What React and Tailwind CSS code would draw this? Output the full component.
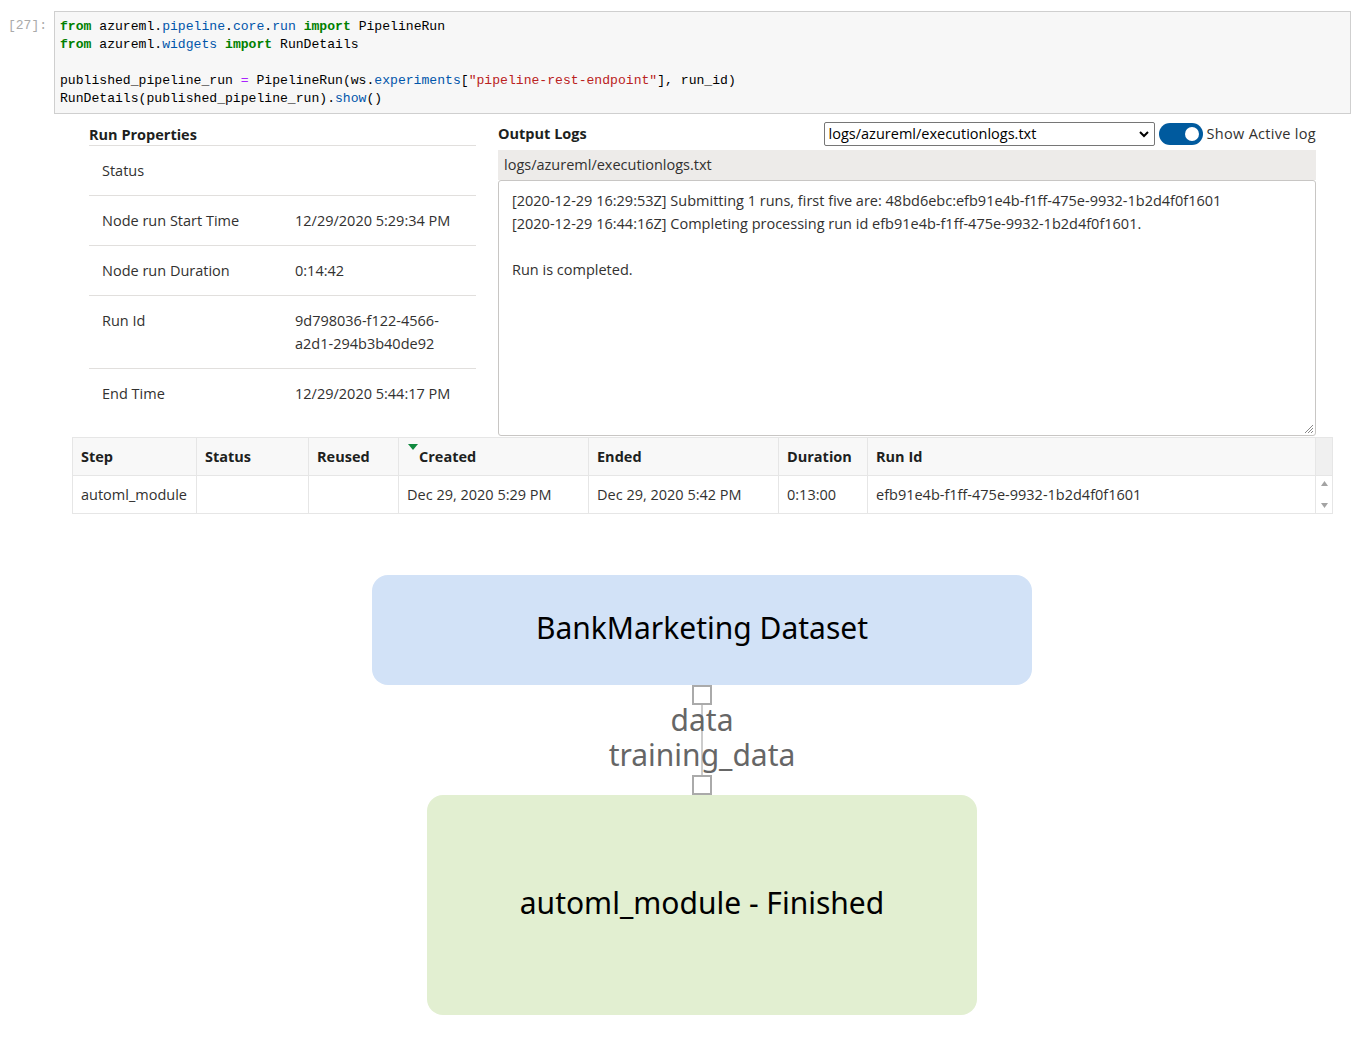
import React from "react";

const sans = "font-['Open_Sans',sans-serif]";

const props = [
  { label: "Status", value: "" },
  { label: "Node run Start Time", value: "12/29/2020 5:29:34 PM" },
  { label: "Node run Duration", value: "0:14:42" },
  { label: "Run Id", value: "9d798036-f122-4566-a2d1-294b3b40de92" },
  { label: "End Time", value: "12/29/2020 5:44:17 PM" },
];

const cols = [
  { name: "Step", w: "w-[124px]", v: "automl_module" },
  { name: "Status", w: "w-[112px]", v: "" },
  { name: "Reused", w: "w-[90px]", v: "" },
  { name: "Created", w: "w-[190px]", v: "Dec 29, 2020 5:29 PM", sorted: true },
  { name: "Ended", w: "w-[190px]", v: "Dec 29, 2020 5:42 PM" },
  { name: "Duration", w: "w-[89px]", v: "0:13:00" },
  { name: "Run Id", w: "flex-1", v: "efb91e4b-f1ff-475e-9932-1b2d4f0f1601" },
];

function CodeCell() {
  return (
    <div className="flex pt-[11px] pr-[9px]">
      <div className="w-[54px] shrink-0 pl-[8px] pt-[6px] font-['Liberation_Mono',monospace] text-[13px] leading-[18px] text-[#aaaaaa]">
        [27]:
      </div>
      <pre className="flex-1 h-[103px] bg-[#f7f7f7] border border-[#cfcfcf] pl-[5px] pt-[6px] font-['Liberation_Mono',monospace] text-[13.1px] leading-[18px] text-black">
        <span className="text-[#008000] font-bold">from</span> azureml.<span className="text-[#0055aa]">pipeline</span>.<span className="text-[#0055aa]">core</span>.<span className="text-[#0055aa]">run</span> <span className="text-[#008000] font-bold">import</span> PipelineRun{"\n"}
        <span className="text-[#008000] font-bold">from</span> azureml.<span className="text-[#0055aa]">widgets</span> <span className="text-[#008000] font-bold">import</span> RunDetails{"\n"}
        {"\n"}
        published_pipeline_run <span className="text-[#aa22ff]">=</span> PipelineRun(ws.<span className="text-[#0055aa]">experiments</span>[<span className="text-[#ba2121]">"pipeline-rest-endpoint"</span>], run_id){"\n"}
        RunDetails(published_pipeline_run).<span className="text-[#0055aa]">show</span>()
      </pre>
    </div>
  );
}

function RunProperties() {
  return (
    <div className="w-[387px] shrink-0">
      <div className="h-[32px] pt-[11px] border-b border-[#e1dfdd] text-[14.5px] leading-[20px] font-bold text-[#201f1e]">
        Run Properties
      </div>
      {props.map((p, i) => (
        <div
          key={p.label}
          className={`flex pl-[13px] py-[13px] text-[14.5px] leading-[23px] text-[#323130] ${i < props.length - 1 ? "border-b border-[#e1dfdd]" : ""}`}
        >
          <div className="w-[193px] shrink-0">{p.label}</div>
          <div className="w-[165px]">{p.value}</div>
        </div>
      ))}
    </div>
  );
}

function OutputLogs() {
  return (
    <div className="flex-1 ml-[22px] mr-[44px] flex flex-col">
      <div className="flex items-center h-[36px] pt-[4px]">
        <div className="text-[14.5px] font-bold text-[#201f1e]">Output Logs</div>
        <div className="ml-auto flex items-center">
          <div className="w-[331px] h-[24px] border border-[#767676] rounded-[2px] flex items-center px-[4px] text-[14.5px] text-black bg-white">
            <span>logs/azureml/executionlogs.txt</span>
            <svg className="ml-auto w-[12px] h-[12px]" viewBox="0 0 12 12" fill="none" stroke="black" strokeWidth="2">
              <path d="M2 4l4 4 4-4" />
            </svg>
          </div>
          <div className="ml-[4px] w-[44px] h-[22px] rounded-full bg-[#005a9e] flex items-center justify-end pr-[4px]">
            <div className="w-[14px] h-[14px] rounded-full bg-white" />
          </div>
          <span className="ml-[4px] text-[14.5px] tracking-[0.3px] text-[#323130]">Show Active log</span>
        </div>
      </div>
      <div className="h-[30px] bg-[#edebe9] pl-[6px] flex items-center text-[14.5px] text-[#323130]">
        logs/azureml/executionlogs.txt
      </div>
      <div className="relative h-[256px] border border-[#c8c6c4] rounded-[3px] bg-white pl-[13px] pt-[8px] text-[14.5px] leading-[23px] text-[#323130]">
        <div>[2020-12-29 16:29:53Z] Submitting 1 runs, first five are: 48bd6ebc:efb91e4b-f1ff-475e-9932-1b2d4f0f1601</div>
        <div>[2020-12-29 16:44:16Z] Completing processing run id efb91e4b-f1ff-475e-9932-1b2d4f0f1601.</div>
        <div>&nbsp;</div>
        <div>Run is completed.</div>
        <svg className="absolute right-[2px] bottom-[2px] w-[9px] h-[9px]" viewBox="0 0 9 9" stroke="#888" strokeWidth="1">
          <path d="M1 9L9 1M4 9L9 4M7 9L9 7" />
        </svg>
      </div>
    </div>
  );
}

function StepsTable() {
  return (
    <div className="mt-[1px] ml-[72px] mr-[27px] border border-[#e6e6e6] text-[14.5px] text-[#323130]">
      <div className="flex h-[38px] bg-[#f8f8f8] border-b border-[#e6e6e6]">
        {cols.map((c) => (
          <div key={c.name} className={`${c.w} relative border-r border-[#e6e6e6] pl-[8px] pt-[1px] flex items-center font-bold text-[#201f1e]`}>
            {c.sorted && (
              <svg className="absolute left-[9px] top-[6px] w-[10px] h-[6px]" viewBox="0 0 10 6">
                <path d="M0 0h10L5 6z" fill="#10893e" />
              </svg>
            )}
            <span className={c.sorted ? "pl-[12px]" : ""}>{c.name}</span>
          </div>
        ))}
        <div className="w-[16px] bg-[#f0f0f0]" />
      </div>
      <div className="flex h-[37px]">
        {cols.map((c) => (
          <div key={c.name} className={`${c.w} border-r border-[#e6e6e6] pl-[8px] pt-[1px] flex items-center`}>
            {c.v}
          </div>
        ))}
        <div className="w-[16px] flex flex-col items-center justify-between py-[5px]">
          <svg className="w-[7px] h-[5px]" viewBox="0 0 7 5"><path d="M0 5h7L3.5 0z" fill="#a3a3a3" /></svg>
          <svg className="w-[7px] h-[5px]" viewBox="0 0 7 5"><path d="M0 0h7L3.5 5z" fill="#a3a3a3" /></svg>
        </div>
      </div>
    </div>
  );
}

function Graph() {
  return (
    <div className="flex flex-col items-center mt-[61px] pl-[44px] font-['Noto_Sans',sans-serif]">
      <div className="w-[660px] h-[110px] rounded-[16px] bg-[#d2e2f7] flex items-center justify-center pb-[6px] text-[30px] text-black">
        BankMarketing Dataset
      </div>
      <div className="w-[20px] h-[20px] border-2 border-[#aaaaaa] bg-white" />
      <div className="relative h-[70px] w-[300px] flex justify-center">
        <div className="w-[2px] h-full bg-[#cccccc]" />
        <div className="absolute inset-0 flex flex-col items-center justify-center pb-[6px] text-[30px] leading-[35px] text-[#666666]">
          <span>data</span>
          <span>training_data</span>
        </div>
      </div>
      <div className="w-[20px] h-[20px] border-2 border-[#aaaaaa] bg-white" />
      <div className="w-[550px] h-[220px] rounded-[16px] bg-[#e2efd1] flex items-center justify-center pb-[6px] text-[30px] text-black">
        automl_module - Finished
      </div>
    </div>
  );
}

export default function App() {
  return (
    <div className={`w-[1360px] h-[1040px] bg-white overflow-hidden ${sans}`}>
      <CodeCell />
      <div className="flex pl-[89px]">
        <RunProperties />
        <OutputLogs />
      </div>
      <StepsTable />
      <Graph />
    </div>
  );
}
